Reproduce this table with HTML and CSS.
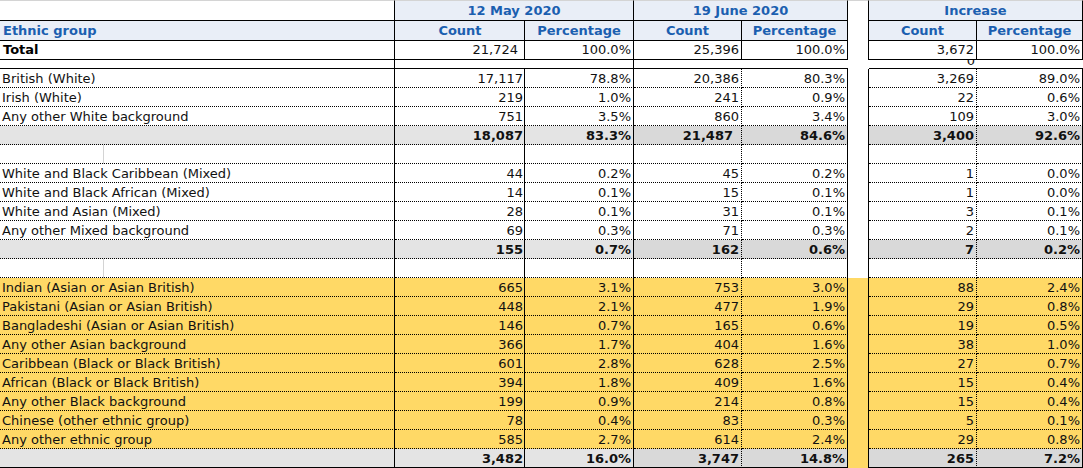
FILE: index.html
```html
<!DOCTYPE html>
<html lang="en">
<head>
<meta charset="utf-8">
<title>Ethnic group counts</title>
<link rel="stylesheet" href="styles.css">
</head>
<body>
<div class="sheet">
  <div class="row h1">
    <div class="c lab"></div>
    <div class="c blk may">12 May 2020</div>
    <div class="c blk jun">19 June 2020</div>
    <div class="c gap"></div>
    <div class="c blk inc">Increase</div>
  </div>
  <div class="row h2">
    <div class="c lab">Ethnic group</div>
    <div class="c mc">Count</div><div class="c mp">Percentage</div>
    <div class="c jc">Count</div><div class="c jp">Percentage</div>
    <div class="c gap"></div>
    <div class="c ic">Count</div><div class="c ip">Percentage</div>
  </div>
  <div class="row tot">
    <div class="c lab">Total</div>
    <div class="c mc">21,724</div><div class="c mp">100.0%</div>
    <div class="c jc">25,396</div><div class="c jp">100.0%</div>
    <div class="c gap"></div>
    <div class="c ic">3,672</div><div class="c ip">100.0%</div>
  </div>
  <div class="row short">
    <div class="c lab"></div>
    <div class="c mc"></div><div class="c mp"></div>
    <div class="c jc"></div><div class="c jp"></div>
    <div class="c gap"></div>
    <div class="c ic">0</div><div class="c ip"></div>
  </div>

  <div class="row first">
    <div class="c lab">British (White)</div>
    <div class="c mc">17,117</div><div class="c mp">78.8%</div>
    <div class="c jc">20,386</div><div class="c jp">80.3%</div>
    <div class="c gap"></div>
    <div class="c ic">3,269</div><div class="c ip">89.0%</div>
  </div>
  <div class="row">
    <div class="c lab">Irish (White)</div>
    <div class="c mc">219</div><div class="c mp">1.0%</div>
    <div class="c jc">241</div><div class="c jp">0.9%</div>
    <div class="c gap"></div>
    <div class="c ic">22</div><div class="c ip">0.6%</div>
  </div>
  <div class="row">
    <div class="c lab">Any other White background</div>
    <div class="c mc">751</div><div class="c mp">3.5%</div>
    <div class="c jc">860</div><div class="c jp">3.4%</div>
    <div class="c gap"></div>
    <div class="c ic">109</div><div class="c ip">3.0%</div>
  </div>
  <div class="row sub">
    <div class="c lab"></div>
    <div class="c mc">18,087</div><div class="c mp">83.3%</div>
    <div class="c jc wide">21,487</div><div class="c jp">84.6%</div>
    <div class="c gap"></div>
    <div class="c ic">3,400</div><div class="c ip">92.6%</div>
  </div>
  <div class="row blank">
    <div class="c lab"></div>
    <div class="c mc"></div><div class="c mp"></div>
    <div class="c jc"></div><div class="c jp"></div>
    <div class="c gap"></div>
    <div class="c ic"></div><div class="c ip"></div>
  </div>

  <div class="row">
    <div class="c lab">White and Black Caribbean (Mixed)</div>
    <div class="c mc">44</div><div class="c mp">0.2%</div>
    <div class="c jc">45</div><div class="c jp">0.2%</div>
    <div class="c gap"></div>
    <div class="c ic">1</div><div class="c ip">0.0%</div>
  </div>
  <div class="row">
    <div class="c lab">White and Black African (Mixed)</div>
    <div class="c mc">14</div><div class="c mp">0.1%</div>
    <div class="c jc">15</div><div class="c jp">0.1%</div>
    <div class="c gap"></div>
    <div class="c ic">1</div><div class="c ip">0.0%</div>
  </div>
  <div class="row">
    <div class="c lab">White and Asian (Mixed)</div>
    <div class="c mc">28</div><div class="c mp">0.1%</div>
    <div class="c jc">31</div><div class="c jp">0.1%</div>
    <div class="c gap"></div>
    <div class="c ic">3</div><div class="c ip">0.1%</div>
  </div>
  <div class="row">
    <div class="c lab">Any other Mixed background</div>
    <div class="c mc">69</div><div class="c mp">0.3%</div>
    <div class="c jc">71</div><div class="c jp">0.3%</div>
    <div class="c gap"></div>
    <div class="c ic">2</div><div class="c ip">0.1%</div>
  </div>
  <div class="row sub">
    <div class="c lab"></div>
    <div class="c mc">155</div><div class="c mp">0.7%</div>
    <div class="c jc">162</div><div class="c jp">0.6%</div>
    <div class="c gap"></div>
    <div class="c ic">7</div><div class="c ip">0.2%</div>
  </div>
  <div class="row blank">
    <div class="c lab"></div>
    <div class="c mc"></div><div class="c mp"></div>
    <div class="c jc"></div><div class="c jp"></div>
    <div class="c gap"></div>
    <div class="c ic"></div><div class="c ip"></div>
  </div>

  <div class="row yel">
    <div class="c lab">Indian (Asian or Asian British)</div>
    <div class="c mc">665</div><div class="c mp">3.1%</div>
    <div class="c jc">753</div><div class="c jp">3.0%</div>
    <div class="c gap"></div>
    <div class="c ic">88</div><div class="c ip">2.4%</div>
  </div>
  <div class="row yel">
    <div class="c lab">Pakistani (Asian or Asian British)</div>
    <div class="c mc">448</div><div class="c mp">2.1%</div>
    <div class="c jc">477</div><div class="c jp">1.9%</div>
    <div class="c gap"></div>
    <div class="c ic">29</div><div class="c ip">0.8%</div>
  </div>
  <div class="row yel">
    <div class="c lab">Bangladeshi (Asian or Asian British)</div>
    <div class="c mc">146</div><div class="c mp">0.7%</div>
    <div class="c jc">165</div><div class="c jp">0.6%</div>
    <div class="c gap"></div>
    <div class="c ic">19</div><div class="c ip">0.5%</div>
  </div>
  <div class="row yel">
    <div class="c lab">Any other Asian background</div>
    <div class="c mc">366</div><div class="c mp">1.7%</div>
    <div class="c jc">404</div><div class="c jp">1.6%</div>
    <div class="c gap"></div>
    <div class="c ic">38</div><div class="c ip">1.0%</div>
  </div>
  <div class="row yel">
    <div class="c lab">Caribbean (Black or Black British)</div>
    <div class="c mc">601</div><div class="c mp">2.8%</div>
    <div class="c jc">628</div><div class="c jp">2.5%</div>
    <div class="c gap"></div>
    <div class="c ic">27</div><div class="c ip">0.7%</div>
  </div>
  <div class="row yel">
    <div class="c lab">African (Black or Black British)</div>
    <div class="c mc">394</div><div class="c mp">1.8%</div>
    <div class="c jc">409</div><div class="c jp">1.6%</div>
    <div class="c gap"></div>
    <div class="c ic">15</div><div class="c ip">0.4%</div>
  </div>
  <div class="row yel">
    <div class="c lab">Any other Black background</div>
    <div class="c mc">199</div><div class="c mp">0.9%</div>
    <div class="c jc">214</div><div class="c jp">0.8%</div>
    <div class="c gap"></div>
    <div class="c ic">15</div><div class="c ip">0.4%</div>
  </div>
  <div class="row yel">
    <div class="c lab">Chinese (other ethnic group)</div>
    <div class="c mc">78</div><div class="c mp">0.4%</div>
    <div class="c jc">83</div><div class="c jp">0.3%</div>
    <div class="c gap"></div>
    <div class="c ic">5</div><div class="c ip">0.1%</div>
  </div>
  <div class="row yel">
    <div class="c lab">Any other ethnic group</div>
    <div class="c mc">585</div><div class="c mp">2.7%</div>
    <div class="c jc">614</div><div class="c jp">2.4%</div>
    <div class="c gap"></div>
    <div class="c ic">29</div><div class="c ip">0.8%</div>
  </div>
  <div class="row sub last">
    <div class="c lab"></div>
    <div class="c mc">3,482</div><div class="c mp">16.0%</div>
    <div class="c jc">3,747</div><div class="c jp">14.8%</div>
    <div class="c gap"></div>
    <div class="c ic">265</div><div class="c ip">7.2%</div>
  </div>
</div>
</body>
</html>
```
FILE: styles.css
```css
html, body {
  margin: 0;
  padding: 0;
  background: #fff;
}

.sheet {
  display: grid;
  grid-template-columns: 395px 130px 109px 108px 106px 21px 108px 106px;
  grid-template-rows: 21px 20px 19px 9px;
  grid-auto-rows: 19px;
  width: 1083px;
  font-family: "DejaVu Sans", Verdana, sans-serif;
  font-size: 13px;
  color: #111;
}

.row { display: contents; }

.c {
  box-sizing: border-box;
  display: flex;
  align-items: flex-end;
  justify-content: flex-end;
  line-height: 13px;
  padding: 0 2px 2px 2px;
  white-space: nowrap;
  overflow: hidden;
  border-bottom: 1px dotted #000;
}

/* column borders for body rows */
.lab { justify-content: flex-start; border-right: 1px solid #000; }
.mc { border-right: 1px solid #000; padding-right: 1px; }
.mp { border-right: 1px solid #000; }
.jc { border-right: 1px dotted #000; }
.jp { border-right: 1px solid #000; }
.gap { border-right: 1px solid #000; border-bottom: none; padding: 0; }
.ic { border-right: 1px dotted #000; }
.ip { border-right: 1px solid #000; }

/* header row 1 */
.h1 .c {
  border-top: 1px solid #d4d4d4;
  border-bottom: 1px solid #000;
  padding-bottom: 3px;
}
.h1 .gap { border-bottom: none; }
.h1 .blk {
  grid-column: span 2;
  justify-content: center;
  border-right: 1px solid #000;
  background: #e9eef7;
  color: #1b5fb0;
  font-weight: bold;
}

/* header row 2 */
.h2 .c {
  border-bottom: 1px solid #000;
  border-right-style: solid;
  justify-content: center;
  padding-bottom: 3px;
  background: #e9eef7;
  color: #1b5fb0;
  font-weight: bold;
}
.h2 .lab { justify-content: flex-start; padding-left: 3px; }
.h2 .gap { background: #fff; border-bottom: none; }

/* total row */
.tot .c {
  border-bottom: 1px solid #000;
  border-right-style: solid;
  padding-bottom: 3px;
}
.tot .gap { border-bottom: none; }
.tot .lab { font-weight: bold; color: #000; padding-left: 3px; }
.tot .mc { padding-right: 6px; }

/* short row */
.short .c {
  border-bottom: 1px solid #000;
  border-right: none;
  padding-bottom: 1px;
}
.short .lab, .short .mp { border-right: 1px solid #000; }
.short .gap { border-bottom: none; }
.short .ic { padding-right: 2px; }

/* subtotal rows */
.sub .c { font-weight: bold; background: #e4e4e4; }
.sub .jc, .sub .jp, .sub .ic, .sub .ip { background: #d9d9d9; }
.sub .gap { background: #fff; }
.sub .wide { padding-right: 8px; }

/* blank spacer rows */
.blank .lab {
  background: linear-gradient(to right, transparent 103px, #d4d4d4 103px, #d4d4d4 104px, transparent 104px);
}

/* yellow rows */
.yel .c { background: #ffd966; }
.last .gap { background: #ffd966; }
.last .c { border-bottom: 1px solid #000; }
.last .gap { border-bottom: none; }
```
